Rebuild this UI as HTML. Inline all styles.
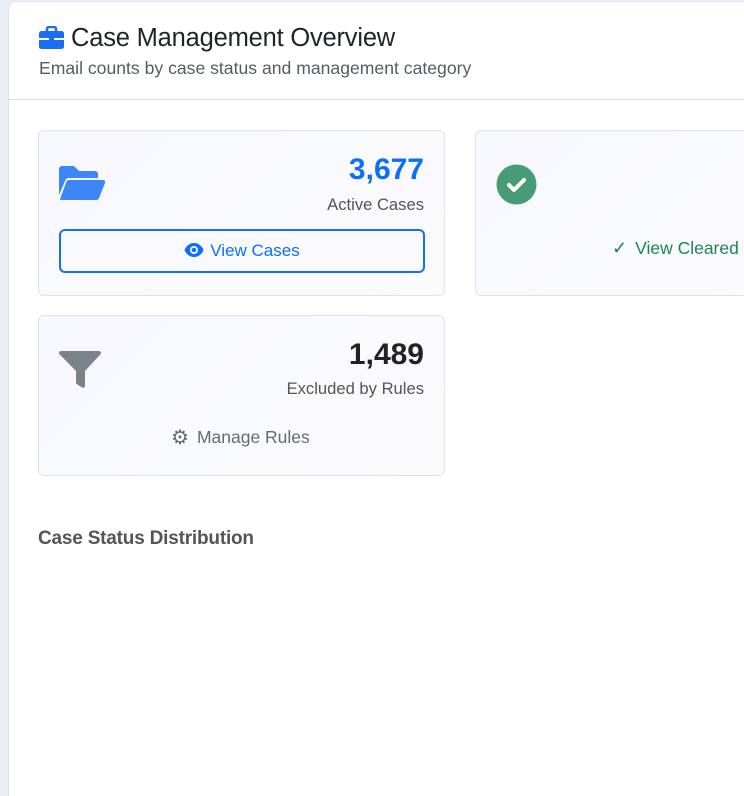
<!DOCTYPE html>
<html style="height:796px;overflow:hidden"><head><style>
*{box-sizing:border-box;margin:0;padding:0}
body{width:744px;height:796px;background:#e9eef7;font-family:"Liberation Sans",sans-serif;overflow:hidden;position:relative}
.panel{position:absolute;left:8px;top:1px;width:740px;height:795px;background:#fff;border:1px solid #dde2ea;border-bottom:none;border-right:none;border-radius:8px 0 0 0}
.hdr{position:absolute;left:0;top:0;width:100%;height:98px;border-bottom:1px solid #dcdfe4}
h1{position:absolute;left:62px;top:22px;font-size:25.5px;font-weight:normal;color:#212529;letter-spacing:-0.2px;white-space:nowrap}
.sub{position:absolute;left:30px;top:56px;font-size:17.6px;color:#555c63;white-space:nowrap}
.card{position:absolute;background:linear-gradient(135deg,#f7f8fc,#fbfbfe);border:1px solid #dfe2e7;border-radius:6px}
.num{position:absolute;right:20px;font-size:30px;font-weight:bold}
.lbl{position:absolute;right:20px;font-size:16.6px;color:#555;white-space:nowrap}
.h2{position:absolute;left:38px;top:528px;font-size:19px;color:#555;font-weight:bold;letter-spacing:-0.2px}
</style></head><body>
<div class="panel">
<div class="hdr">
<svg style="position:absolute;left:30px;top:24px" width="25" height="24" viewBox="0 0 25 24"><path d="M8 5V3a2 2 0 0 1 2-2h5a2 2 0 0 1 2 2v2" fill="none" stroke="#1a6df5" stroke-width="2.5"/><rect x="0" y="5" width="25" height="18" rx="2.5" fill="#1a6df5"/><rect x="0" y="12" width="25" height="2" fill="#fff"/><rect x="10" y="11" width="5" height="4" fill="#1a6df5"/></svg>
<h1>Case Management Overview</h1>
<div class="sub">Email counts by case status and management category</div>
</div>
</div>

<div class="card" style="left:38px;top:130px;width:407px;height:166px">
<svg style="position:absolute;left:20px;top:34px" width="46" height="36" viewBox="0 0 46 36"><path d="M0 4a3 3 0 0 1 3-3h12l5 5h16a3 3 0 0 1 3 3v4H10a4 4 0 0 0-4 3L0 30z" fill="#3d86f5"/><path d="M10 15h34a2 2 0 0 1 2 3l-6 15a3 3 0 0 1-3 2H2a1 1 0 0 1-1-1l6-16a3 3 0 0 1 3-3z" fill="#3d86f5"/></svg>
<div class="num" style="top:22px;color:#0d6efd">3,677</div>
<div class="lbl" style="top:64px">Active Cases</div>
<div style="position:absolute;left:20px;top:98px;width:366px;height:44px;border:2px solid #1a6df5;border-radius:6px;color:#0d6efd;font-size:17px;text-align:center;line-height:40px">
<svg style="vertical-align:-2px;margin-right:6px" width="20" height="16" viewBox="0 0 20 16"><path d="M10 1C5 1 1.5 5 0.5 8c1 3 4.5 7 9.5 7s8.5-4 9.5-7C18.5 5 15 1 10 1z" fill="#0d6efd"/><circle cx="10" cy="8" r="4" fill="#fff"/><circle cx="10" cy="8" r="2.3" fill="#0d6efd"/></svg>View Cases</div>
</div>

<div class="card" style="left:475px;top:130px;width:300px;height:166px">
<svg style="position:absolute;left:20px;top:33px" width="41" height="41" viewBox="0 0 41 41"><circle cx="20.5" cy="20.5" r="20" fill="#479c76"/><path d="M13 21l5 5 10-10" fill="none" stroke="#fff" stroke-width="4" stroke-linecap="round" stroke-linejoin="round"/></svg>
<div style="position:absolute;left:136px;top:107px;font-size:17.5px;color:#198754;white-space:nowrap"><span style="font-size:18px;margin-right:8px">✓</span>View Cleared</div>
</div>

<div class="card" style="left:38px;top:315px;width:407px;height:161px">
<svg style="position:absolute;left:20px;top:35px" width="42" height="38" viewBox="0 0 42 38"><path d="M2 0h38a2 2 0 0 1 1.5 3.3L26 20v15a2 2 0 0 1-3 1.5l-6-4V20L0.5 3.3A2 2 0 0 1 2 0z" fill="#7b828a"/></svg>
<div class="num" style="top:22px;color:#222">1,489</div>
<div class="lbl" style="top:63px">Excluded by Rules</div>
<div style="position:absolute;left:132px;top:109px;font-size:17.5px;color:#636b74;white-space:nowrap"><span style="font-size:20px;margin-right:8px;vertical-align:-1px">⚙</span>Manage Rules</div>
</div>

<div class="h2">Case Status Distribution</div>
</body></html>
